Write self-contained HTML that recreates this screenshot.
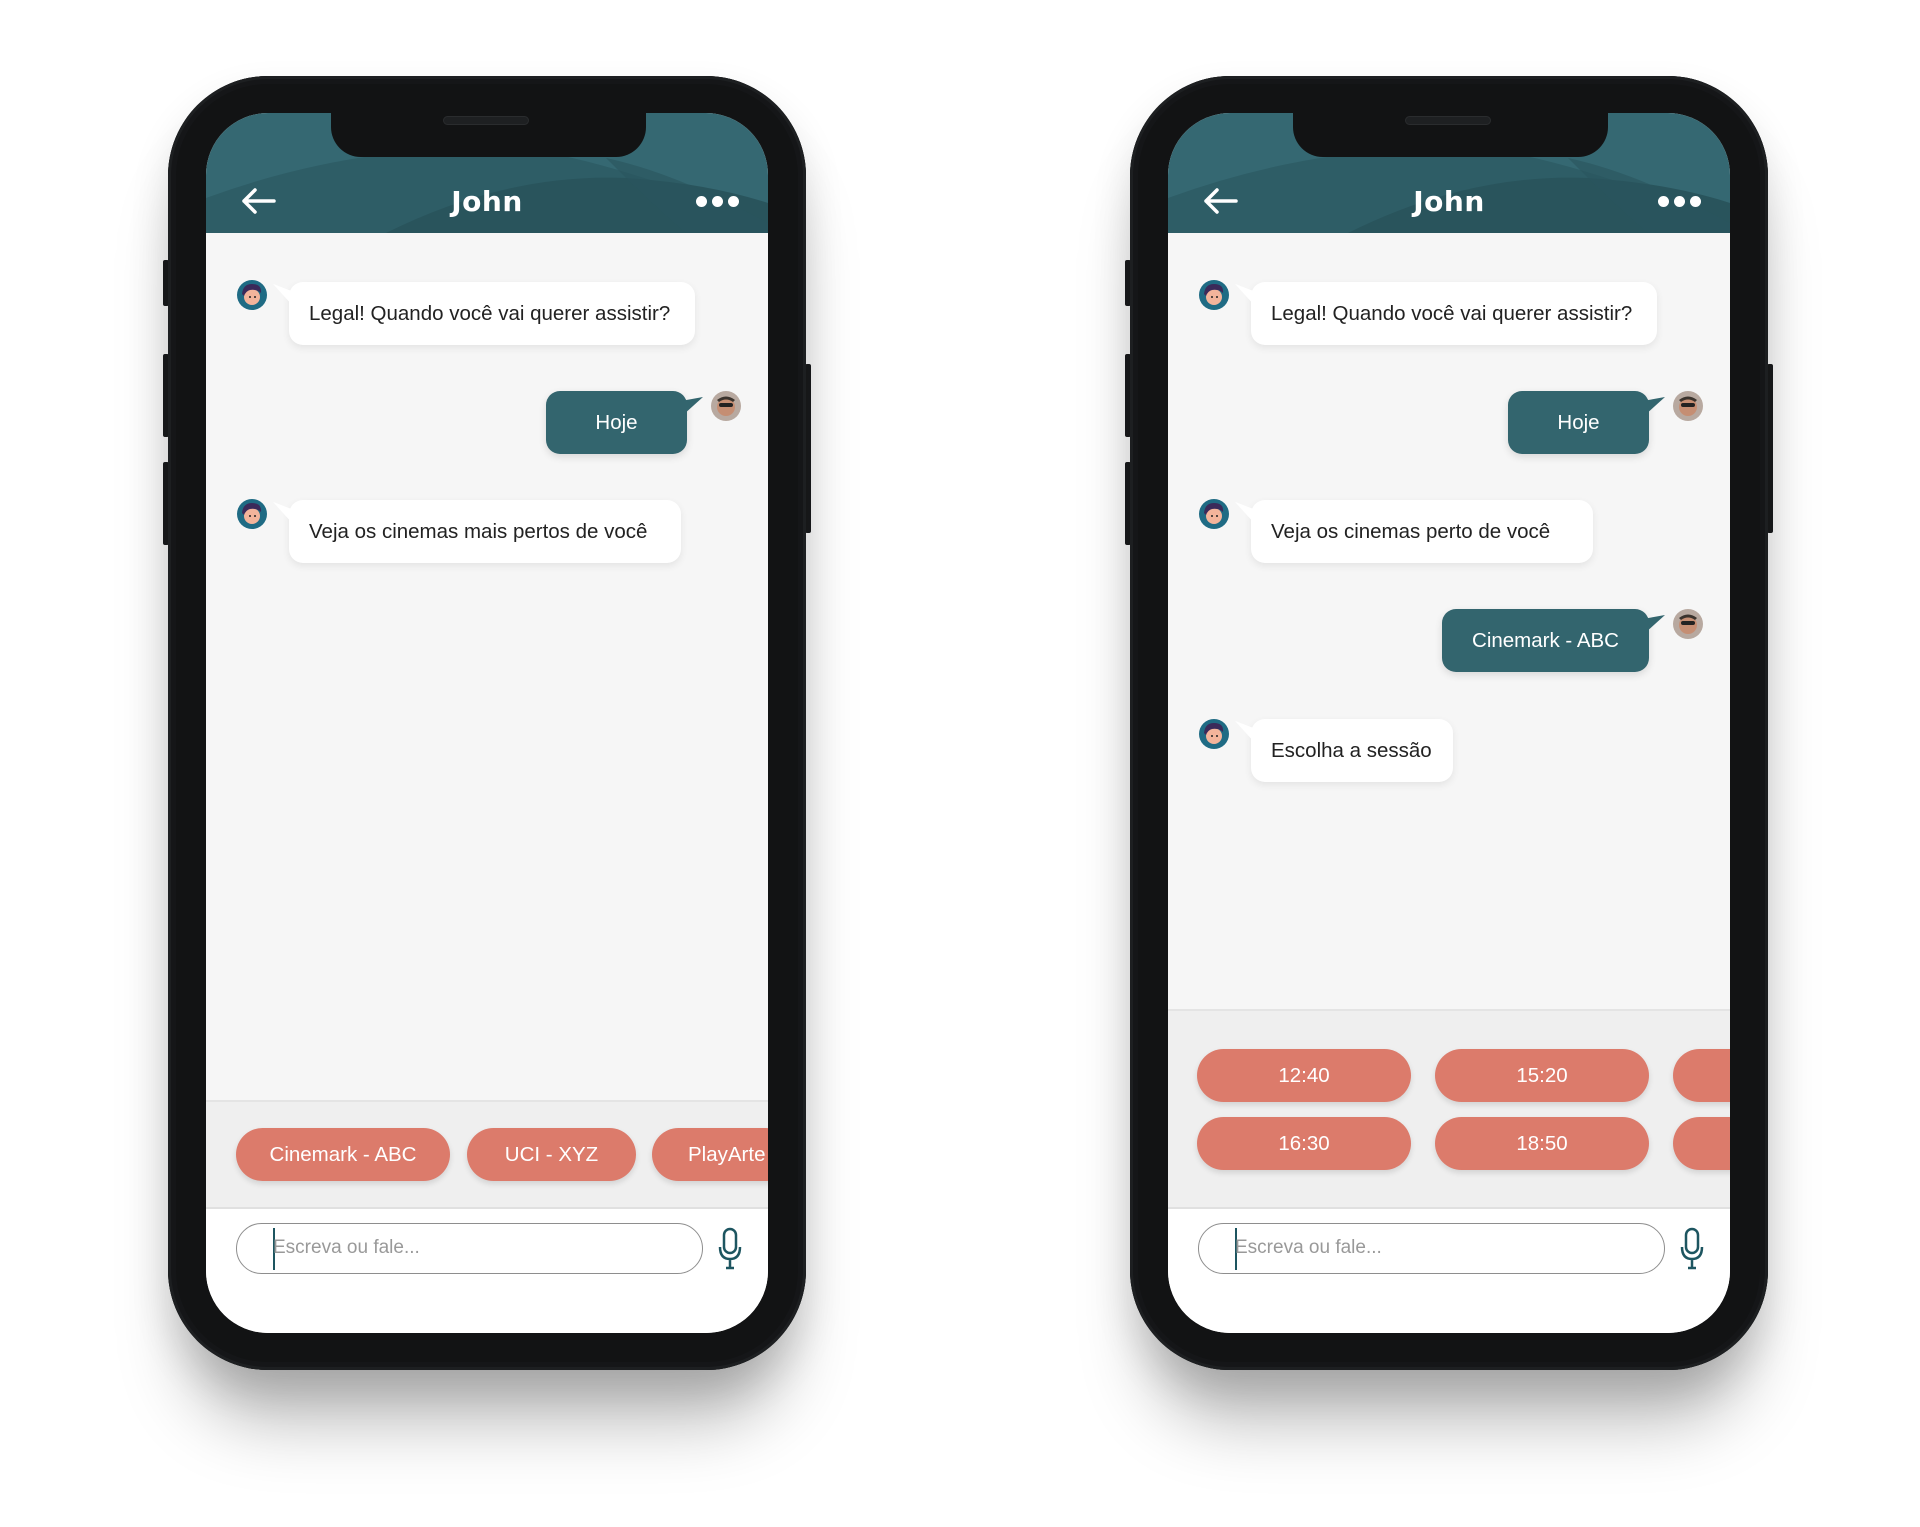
<!DOCTYPE html>
<html><head><meta charset="utf-8"><style>
*{margin:0;padding:0;box-sizing:border-box}
body{width:1920px;height:1527px;background:#fff;position:relative;overflow:hidden;font-family:"Liberation Sans","DejaVu Sans",sans-serif}
.phone{position:absolute;top:76px;width:638px;height:1294px;border-radius:100px;background:#121314;box-shadow:0 70px 70px -20px rgba(0,0,0,.28),0 20px 40px rgba(0,0,0,.12),inset 0 0 0 3px #1d1f21,inset 0 0 0 8px #151618}
.btn{position:absolute;background:#1a1b1d;border-radius:2px}
.screen{position:absolute;left:38px;top:37px;width:562px;height:1220px;border-radius:62px;overflow:hidden;background:#f6f6f6}
.header{position:absolute;left:0;top:0;width:562px;height:120px}
.notch{position:absolute;left:125px;top:-5px;width:315px;height:49px;background:#121314;border-radius:0 0 30px 30px}
.spk{position:absolute;left:112px;top:8px;width:86px;height:9px;border-radius:5px;background:#1e2022;border:1px solid #2a2c2e}
.title{position:absolute;left:0;width:562px;top:72px;text-align:center;color:#fff;font:900 28px "DejaVu Sans","Liberation Sans",sans-serif;letter-spacing:.5px}
.dot{position:absolute;top:83px;width:11px;height:11px;border-radius:50%;background:#fff}
.b{position:absolute;height:63px;border-radius:14px;background:#fff;box-shadow:0 3px 8px rgba(0,0,0,.08);font-size:20.5px;line-height:63px;padding-left:20px;color:#222;white-space:nowrap}
.b.l::before{content:"";position:absolute;left:-16px;top:0;width:20px;height:24px;background:#fff;clip-path:polygon(0 8%,100% 40%,100% 100%)}
.u{position:absolute;height:63px;border-radius:14px;background:#33656e;box-shadow:0 3px 8px rgba(0,0,0,.12);font-size:20.5px;line-height:63px;text-align:center;color:#fff}
.u::after{content:"";position:absolute;right:-16px;top:0;width:20px;height:24px;background:#33656e;clip-path:polygon(100% 25%,0 40%,0 100%)}
.av{position:absolute;width:30px;height:30px}
.chips{position:absolute;left:0;width:562px;background:#efefef;border-top:2px solid #e4e4e4;border-bottom:2px solid #e0e0e0}
.c{position:absolute;height:53px;border-radius:27px;background:#dc7b6b;color:#fff;font-size:20.5px;line-height:53px;text-align:center;box-shadow:0 3px 6px rgba(0,0,0,.12);white-space:nowrap;overflow:hidden}
.inp{position:absolute;left:30px;top:1110px;width:467px;height:51px;border:1.5px solid #8e8e8e;border-radius:26px;background:#fff}
.inp span{position:absolute;left:36px;top:13px;font-size:19px;color:#999}
.inp i{position:absolute;left:36px;top:4px;width:2px;height:42px;background:#1d5560}
.bot{position:absolute;left:0;top:1096px;width:562px;height:124px;background:#fff}
</style></head><body>

<!-- LEFT PHONE -->
<div class="btn" style="left:163px;top:260px;width:6px;height:46px"></div>
<div class="btn" style="left:163px;top:354px;width:6px;height:83px"></div>
<div class="btn" style="left:163px;top:462px;width:6px;height:83px"></div>
<div class="btn" style="left:805px;top:364px;width:6px;height:169px"></div>
<div class="phone" style="left:168px">
 <div class="screen">
  <svg class="header" viewBox="0 0 562 120"><rect width="562" height="120" fill="#356872"/><path d="M0 85 Q150 30 310 35 Q400 45 562 110 L562 120 L0 120Z" fill="#2e5d66"/><path d="M180 120 Q300 60 420 65 Q500 70 562 90 L562 120Z" fill="#29545c"/><path d="M400 45 Q470 60 562 110 L562 120 L480 120 Q450 95 400 45Z" fill="#2a555d" opacity=".6"/></svg>
  <div class="notch"><div class="spk"></div></div>
  <svg style="position:absolute;left:34px;top:74px" width="36" height="28" viewBox="0 0 36 28"><path d="M34 14H4M15 3L4 14L15 25" stroke="#fff" stroke-width="3.5" fill="none" stroke-linecap="round" stroke-linejoin="round"/></svg>
  <div class="title">John</div>
  <div class="dot" style="left:490px"></div><div class="dot" style="left:506px"></div><div class="dot" style="left:522px"></div>
  <div class="b l" style="left:83px;top:169px;width:406px">Legal! Quando você vai querer assistir?</div>
  <svg class="av" style="left:31px;top:167px" viewBox="0 0 30 30"><circle cx="15" cy="15" r="15" fill="#1f6b84"/><circle cx="15" cy="17" r="8" fill="#f3b49b"/><path d="M5 14 Q6 4 15 4 Q25 4 24 13 Q20 9 13 10 Q9 11 7 16Z" fill="#3b2a5a"/><circle cx="13" cy="17" r="1" fill="#222"/><circle cx="18" cy="17" r="1" fill="#222"/></svg>
  <div class="u" style="left:340px;top:278px;width:141px">Hoje</div>
  <svg class="av" style="left:505px;top:278px" viewBox="0 0 30 30"><circle cx="15" cy="15" r="15" fill="#b8a9a0"/><circle cx="15" cy="16" r="9" fill="#c58e73"/><rect x="8" y="12" width="14" height="4" rx="2" fill="#222"/><path d="M6 9 Q15 2 24 9 L22 11 Q15 6 8 11Z" fill="#3a332d"/></svg>
  <div class="b l" style="left:83px;top:387px;width:392px">Veja os cinemas mais pertos de você</div>
  <svg class="av" style="left:31px;top:386px" viewBox="0 0 30 30"><circle cx="15" cy="15" r="15" fill="#1f6b84"/><circle cx="15" cy="17" r="8" fill="#f3b49b"/><path d="M5 14 Q6 4 15 4 Q25 4 24 13 Q20 9 13 10 Q9 11 7 16Z" fill="#3b2a5a"/><circle cx="13" cy="17" r="1" fill="#222"/><circle cx="18" cy="17" r="1" fill="#222"/></svg>
  <div class="chips" style="top:987px;height:109px"></div>
  <div class="c" style="left:30px;top:1015px;width:214px">Cinemark - ABC</div>
  <div class="c" style="left:261px;top:1015px;width:169px">UCI - XYZ</div>
  <div class="c" style="left:446px;top:1015px;width:140px;text-align:left;padding-left:36px">PlayArte</div>
  <div class="bot"></div>
  <div class="inp"><i></i><span>Escreva ou fale...</span></div>
  <svg style="position:absolute;left:512px;top:1114px" width="24" height="44" viewBox="0 0 24 44"><rect x="6" y="2" width="12" height="24" rx="6" fill="none" stroke="#1d5560" stroke-width="2.5"/><path d="M2 20 Q2 32 12 32 Q22 32 22 20M12 32V41M8 41H16" fill="none" stroke="#1d5560" stroke-width="2.5"/></svg>
 </div>
</div>

<!-- RIGHT PHONE -->
<div class="btn" style="left:1125px;top:260px;width:6px;height:46px"></div>
<div class="btn" style="left:1125px;top:354px;width:6px;height:83px"></div>
<div class="btn" style="left:1125px;top:462px;width:6px;height:83px"></div>
<div class="btn" style="left:1767px;top:364px;width:6px;height:169px"></div>
<div class="phone" style="left:1130px">
 <div class="screen">
  <svg class="header" viewBox="0 0 562 120"><rect width="562" height="120" fill="#356872"/><path d="M0 85 Q150 30 310 35 Q400 45 562 110 L562 120 L0 120Z" fill="#2e5d66"/><path d="M180 120 Q300 60 420 65 Q500 70 562 90 L562 120Z" fill="#29545c"/><path d="M400 45 Q470 60 562 110 L562 120 L480 120 Q450 95 400 45Z" fill="#2a555d" opacity=".6"/></svg>
  <div class="notch"><div class="spk"></div></div>
  <svg style="position:absolute;left:34px;top:74px" width="36" height="28" viewBox="0 0 36 28"><path d="M34 14H4M15 3L4 14L15 25" stroke="#fff" stroke-width="3.5" fill="none" stroke-linecap="round" stroke-linejoin="round"/></svg>
  <div class="title">John</div>
  <div class="dot" style="left:490px"></div><div class="dot" style="left:506px"></div><div class="dot" style="left:522px"></div>
  <div class="b l" style="left:83px;top:169px;width:406px">Legal! Quando você vai querer assistir?</div>
  <svg class="av" style="left:31px;top:167px" viewBox="0 0 30 30"><circle cx="15" cy="15" r="15" fill="#1f6b84"/><circle cx="15" cy="17" r="8" fill="#f3b49b"/><path d="M5 14 Q6 4 15 4 Q25 4 24 13 Q20 9 13 10 Q9 11 7 16Z" fill="#3b2a5a"/><circle cx="13" cy="17" r="1" fill="#222"/><circle cx="18" cy="17" r="1" fill="#222"/></svg>
  <div class="u" style="left:340px;top:278px;width:141px">Hoje</div>
  <svg class="av" style="left:505px;top:278px" viewBox="0 0 30 30"><circle cx="15" cy="15" r="15" fill="#b8a9a0"/><circle cx="15" cy="16" r="9" fill="#c58e73"/><rect x="8" y="12" width="14" height="4" rx="2" fill="#222"/><path d="M6 9 Q15 2 24 9 L22 11 Q15 6 8 11Z" fill="#3a332d"/></svg>
  <div class="b l" style="left:83px;top:387px;width:342px">Veja os cinemas perto de você</div>
  <svg class="av" style="left:31px;top:386px" viewBox="0 0 30 30"><circle cx="15" cy="15" r="15" fill="#1f6b84"/><circle cx="15" cy="17" r="8" fill="#f3b49b"/><path d="M5 14 Q6 4 15 4 Q25 4 24 13 Q20 9 13 10 Q9 11 7 16Z" fill="#3b2a5a"/><circle cx="13" cy="17" r="1" fill="#222"/><circle cx="18" cy="17" r="1" fill="#222"/></svg>
  <div class="u" style="left:274px;top:496px;width:207px">Cinemark - ABC</div>
  <svg class="av" style="left:505px;top:496px" viewBox="0 0 30 30"><circle cx="15" cy="15" r="15" fill="#b8a9a0"/><circle cx="15" cy="16" r="9" fill="#c58e73"/><rect x="8" y="12" width="14" height="4" rx="2" fill="#222"/><path d="M6 9 Q15 2 24 9 L22 11 Q15 6 8 11Z" fill="#3a332d"/></svg>
  <div class="b l" style="left:83px;top:606px;width:202px">Escolha a sessão</div>
  <svg class="av" style="left:31px;top:606px" viewBox="0 0 30 30"><circle cx="15" cy="15" r="15" fill="#1f6b84"/><circle cx="15" cy="17" r="8" fill="#f3b49b"/><path d="M5 14 Q6 4 15 4 Q25 4 24 13 Q20 9 13 10 Q9 11 7 16Z" fill="#3b2a5a"/><circle cx="13" cy="17" r="1" fill="#222"/><circle cx="18" cy="17" r="1" fill="#222"/></svg>
  <div class="chips" style="top:896px;height:200px"></div>
  <div class="c" style="left:29px;top:936px;width:214px">12:40</div>
  <div class="c" style="left:267px;top:936px;width:214px">15:20</div>
  <div class="c" style="left:505px;top:936px;width:214px"></div>
  <div class="c" style="left:29px;top:1004px;width:214px">16:30</div>
  <div class="c" style="left:267px;top:1004px;width:214px">18:50</div>
  <div class="c" style="left:505px;top:1004px;width:214px"></div>
  <div class="bot"></div>
  <div class="inp"><i></i><span>Escreva ou fale...</span></div>
  <svg style="position:absolute;left:512px;top:1114px" width="24" height="44" viewBox="0 0 24 44"><rect x="6" y="2" width="12" height="24" rx="6" fill="none" stroke="#1d5560" stroke-width="2.5"/><path d="M2 20 Q2 32 12 32 Q22 32 22 20M12 32V41M8 41H16" fill="none" stroke="#1d5560" stroke-width="2.5"/></svg>
 </div>
</div>
</body></html>
